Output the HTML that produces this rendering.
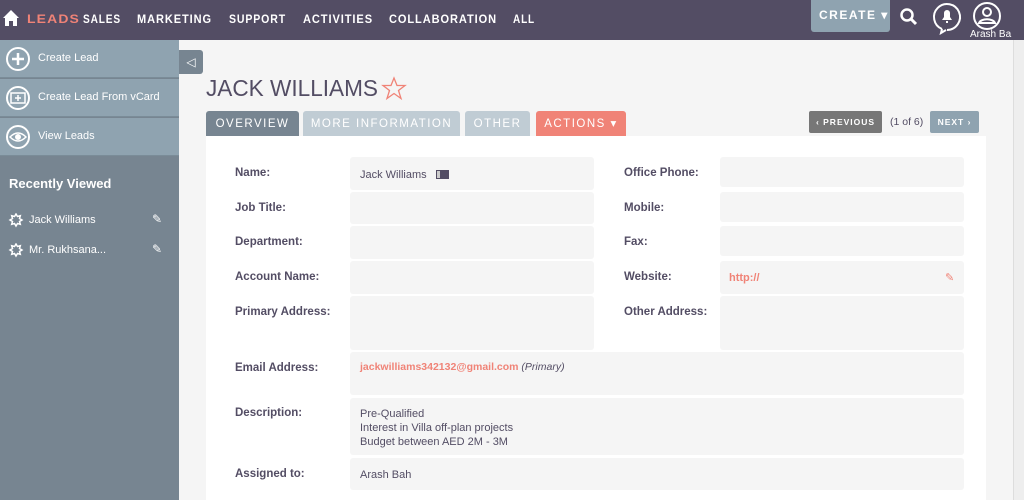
<!DOCTYPE html>
<html><head><style>
*{margin:0;padding:0;box-sizing:border-box}
body{width:1024px;height:500px;overflow:hidden;background:#f5f5f5;font-family:"Liberation Sans",sans-serif;position:relative;color:#534d64}
.a{position:absolute}
.nav{left:0;top:0;width:1024px;height:40px;background:#534d64}
.sb{left:0;top:40px;width:179px;height:460px;background:#778591}
.si{position:absolute;left:0;width:179px;height:38px;background:#8fa3b0;border-bottom:1px solid #7a8c98;color:#fff;font-size:11px}
.si .c{position:absolute;left:6px;top:7px;width:24px;height:24px;border:2px solid #fff;border-radius:50%;}
.si b{position:absolute;left:38px;top:12px;font-weight:normal}
.lab{position:absolute;font-size:11.5px;font-weight:bold;color:#534d64}
.box{position:absolute;background:#f5f5f5;border-radius:3px}
.val{position:absolute;font-size:11px;color:#534d64}
.tab{position:absolute;top:111px;height:25px;font-size:11.5px;letter-spacing:1.5px;color:#fff;text-align:center;line-height:26px;border-radius:3px 3px 0 0}
</style></head><body>
<div class="a nav">
<svg class="a" style="left:2px;top:9px" width="18" height="18" viewBox="0 0 18 18"><path d="M9 1L1 9h2v8h4v-5h4v5h4V9h2z" fill="#fff"/></svg>
<svg class="a" style="left:0;top:0" width="560" height="40" font-family="Liberation Sans" font-size="12" font-weight="bold" fill="#fff" letter-spacing="1">
<text x="27" y="23" textLength="53" lengthAdjust="spacingAndGlyphs" fill="#f08377">LEADS</text>
<text x="83" y="23" textLength="38" lengthAdjust="spacingAndGlyphs">SALES</text>
<text x="137" y="23" textLength="75" lengthAdjust="spacingAndGlyphs">MARKETING</text>
<text x="229" y="23" textLength="57" lengthAdjust="spacingAndGlyphs">SUPPORT</text>
<text x="303" y="23" textLength="70" lengthAdjust="spacingAndGlyphs">ACTIVITIES</text>
<text x="389" y="23" textLength="108" lengthAdjust="spacingAndGlyphs">COLLABORATION</text>
<text x="513" y="23" textLength="22" lengthAdjust="spacingAndGlyphs">ALL</text>
</svg>
<div class="a" style="left:811px;top:0;width:79px;height:32px;background:#8fa3b0;border-radius:0 0 3px 3px;color:#fff;font-size:12px;letter-spacing:1.5px;font-weight:bold;line-height:30px;padding-left:8px">CREATE ▾</div>
<svg class="a" style="left:899px;top:7px" width="20" height="20" viewBox="0 0 20 20"><circle cx="8" cy="8" r="5.5" stroke="#fff" stroke-width="2.5" fill="none"/><path d="M12 12l5 5" stroke="#fff" stroke-width="3"/></svg>
<svg class="a" style="left:931px;top:1px" width="32" height="34" viewBox="0 0 32 34"><path d="M11 28A13 13 0 1 1 16 29" stroke="#fff" stroke-width="2" fill="none"/><path d="M11 28l-1 4l5-3" stroke="#fff" stroke-width="2" fill="none"/><path d="M11 19h10l-2-3v-4a3 3 0 0 0-6 0v4z M15 20h2v2h-2z" fill="#fff"/></svg>
<svg class="a" style="left:972px;top:1px" width="30" height="30" viewBox="0 0 30 30"><circle cx="15" cy="15" r="13" stroke="#fff" stroke-width="2" fill="none"/><circle cx="15" cy="11" r="4" stroke="#fff" stroke-width="2" fill="none"/><path d="M7 22c2-5 14-5 16 0z" stroke="#fff" stroke-width="2" fill="none"/></svg>
<div class="a" style="left:970px;top:29px;font-size:10px;color:#fff">Arash Ba</div>
</div>
<div class="a sb">
<div class="si" style="top:0"><div class="c"><svg width="20" height="20"><path d="M10 4v12M4 10h12" stroke="#fff" stroke-width="2.5"/></svg></div><b>Create Lead</b></div>
<div class="si" style="top:39px"><div class="c"><svg width="20" height="20"><rect x="3" y="5" width="14" height="10" stroke="#fff" stroke-width="1.5" fill="none"/><path d="M10 7v6M7 10h6" stroke="#fff" stroke-width="1.5"/></svg></div><b>Create Lead From vCard</b></div>
<div class="si" style="top:78px"><div class="c"><svg width="20" height="20"><path d="M2 10q8-8 16 0q-8 8-16 0z" stroke="#fff" stroke-width="1.5" fill="none"/><circle cx="10" cy="10" r="3" fill="#fff"/></svg></div><b>View Leads</b></div>
<div class="a" style="left:9px;top:136px;color:#fff;font-size:13px;font-weight:bold">Recently Viewed</div>
<svg class="a" style="left:8px;top:173px" width="16" height="16" viewBox="0 0 16 16"><path d="M8 1l1.5 2.5 2.8-.8-.8 2.8L14 7l-2.5 1.5.8 2.8-2.8-.8L8 13l-1.5-2.5-2.8.8.8-2.8L2 7l2.5-1.5-.8-2.8 2.8.8z" stroke="#fff" stroke-width="1.5" fill="none"/></svg>
<svg class="a" style="left:8px;top:203px" width="16" height="16" viewBox="0 0 16 16"><path d="M8 1l1.5 2.5 2.8-.8-.8 2.8L14 7l-2.5 1.5.8 2.8-2.8-.8L8 13l-1.5-2.5-2.8.8.8-2.8L2 7l2.5-1.5-.8-2.8 2.8.8z" stroke="#fff" stroke-width="1.5" fill="none"/></svg>
<div class="a" style="left:29px;top:174px;color:#fff;font-size:11px">Jack Williams</div>
<div class="a" style="left:29px;top:204px;color:#fff;font-size:11px">Mr. Rukhsana...</div>
<div class="a" style="left:152px;top:172px;color:#fff;font-size:12px">✎</div>
<div class="a" style="left:152px;top:202px;color:#fff;font-size:12px">✎</div>
</div>
<div class="a" style="left:179px;top:50px;width:24px;height:24px;background:#778591;border-radius:0 3px 3px 0;color:#fff;font-size:12px;text-align:center;line-height:24px">◁</div>
<div class="a" style="left:1013px;top:40px;width:11px;height:460px;background:#eee;border-left:1px solid #ddd"></div>
<svg class="a" style="left:206px;top:72px" width="210" height="32" font-family="Liberation Sans"><text x="0" y="24" font-size="23" textLength="172" lengthAdjust="spacingAndGlyphs" fill="#534d64">JACK WILLIAMS</text><path d="M188 6l3 7.5h8l-6.5 5 2.5 8-7-5-7 5 2.5-8-6.5-5h8z" stroke="#f08377" stroke-width="1.3" fill="none"/></svg>
<div class="tab" style="left:206px;width:93px;background:#778591">OVERVIEW</div>
<div class="tab" style="left:303px;width:157px;background:#c0ccd4">MORE INFORMATION</div>
<div class="tab" style="left:465px;width:65px;background:#c0ccd4">OTHER</div>
<div class="tab" style="left:536px;width:90px;background:#f08377">ACTIONS ▾</div>
<div class="a" style="left:809px;top:111px;width:73px;height:22px;background:#777;border-radius:2px;color:#fff;font-size:8.5px;font-weight:bold;letter-spacing:1px;line-height:22px;text-align:center">‹ PREVIOUS</div>
<div class="a" style="left:890px;top:116px;font-size:10.5px;color:#534d64">(1 of 6)</div>
<div class="a" style="left:930px;top:111px;width:49px;height:22px;background:#8fa3b0;border-radius:2px;color:#fff;font-size:8.5px;font-weight:bold;letter-spacing:1px;line-height:22px;text-align:center">NEXT ›</div>
<div class="a" style="left:206px;top:136px;width:780px;height:364px;background:#fff"></div>
<div class="box" style="left:350px;top:157px;width:244px;height:33px"></div>
<div class="box" style="left:350px;top:192px;width:244px;height:32px"></div>
<div class="box" style="left:350px;top:226px;width:244px;height:33px"></div>
<div class="box" style="left:350px;top:261px;width:244px;height:33px"></div>
<div class="box" style="left:350px;top:296px;width:244px;height:54px"></div>
<div class="box" style="left:720px;top:157px;width:244px;height:30px"></div>
<div class="box" style="left:720px;top:192px;width:244px;height:30px"></div>
<div class="box" style="left:720px;top:226px;width:244px;height:30px"></div>
<div class="box" style="left:720px;top:261px;width:244px;height:33px"></div>
<div class="box" style="left:720px;top:296px;width:244px;height:54px"></div>
<div class="box" style="left:350px;top:352px;width:614px;height:43px"></div>
<div class="box" style="left:350px;top:398px;width:614px;height:57px"></div>
<div class="box" style="left:350px;top:458px;width:614px;height:32px"></div>
<div class="lab" style="left:235px;top:167px">Name:</div>
<div class="lab" style="left:235px;top:202px">Job Title:</div>
<div class="lab" style="left:235px;top:236px">Department:</div>
<div class="lab" style="left:235px;top:271px">Account Name:</div>
<div class="lab" style="left:235px;top:306px">Primary Address:</div>
<div class="lab" style="left:624px;top:167px">Office Phone:</div>
<div class="lab" style="left:624px;top:202px">Mobile:</div>
<div class="lab" style="left:624px;top:236px">Fax:</div>
<div class="lab" style="left:624px;top:271px">Website:</div>
<div class="lab" style="left:624px;top:306px">Other Address:</div>
<div class="lab" style="left:235px;top:362px">Email Address:</div>
<div class="lab" style="left:235px;top:407px">Description:</div>
<div class="lab" style="left:235px;top:468px">Assigned to:</div>
<div class="val" style="left:360px;top:169px">Jack Williams <span style="display:inline-block;width:13px;height:9px;background:#534d64;border:1px solid #534d64;margin-left:6px;vertical-align:-1px;box-shadow:inset 3px 0 0 #ccc"></span></div>
<div class="val" style="left:729px;top:272px;color:#f08377;font-weight:bold">http://</div>
<div class="val" style="left:945px;top:271px;color:#f08377">✎</div>
<div class="val" style="left:360px;top:361px;font-size:10.5px"><span style="color:#f08377;font-weight:bold">jackwilliams342132@gmail.com</span> <i>(Primary)</i></div>
<div class="val" style="left:360px;top:407px;line-height:14px">Pre-Qualified<br>Interest in Villa off-plan projects<br>Budget between AED 2M - 3M</div>
<div class="val" style="left:360px;top:469px">Arash Bah</div>
</body></html>
